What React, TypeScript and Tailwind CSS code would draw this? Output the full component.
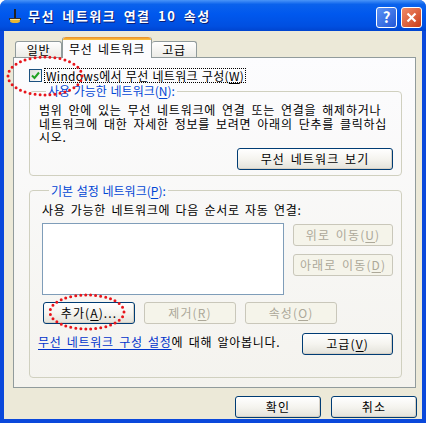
import React from 'react'

const font = "font-['Noto_Sans_CJK_KR','Noto_Sans',sans-serif]"

const XpButton = ({ label, className = '', disabled = false }: { label: React.ReactNode; className?: string; disabled?: boolean }) => (
	<div
		className={
			'flex h-[22px] items-center justify-center rounded-[3px] border text-[12px] leading-none tracking-[1.1px] ' +
			(disabled
				? 'border-[#C9C7BA] bg-[#F5F4EA] text-[#ACA899] '
				: 'border-[#003C74] bg-linear-to-b from-white via-[#F5F4EF] to-[#E3E2DA] text-black shadow-[inset_-1px_-1px_0_#D6D0C5] ') +
			className
		}
	>
		{label}
	</div>
)

const U = ({ children }: { children: React.ReactNode }) => <span className="underline underline-offset-2">{children}</span>

const TitleIcon = () => (
	<svg width="16" height="16" viewBox="0 0 16 16">
		<rect x="7" y="1" width="2" height="10" fill="#222" />
		<rect x="2" y="10" width="12" height="2" fill="#333" />
		<ellipse cx="8" cy="13" rx="5" ry="2" fill="#E8B631" />
		<rect x="3" y="11" width="10" height="1" fill="#FFE38A" />
	</svg>
)

export default function App() {
	return (
		<div className={'relative h-[427px] w-[431px] bg-white tracking-[0.7px] [word-spacing:2px] ' + font}>
			<div className="flex h-[423px] w-[426px] flex-col overflow-hidden rounded-t-[7px] bg-[#0A48DB]">
				{/* title bar */}
				<div className="flex h-[31px] items-center bg-[linear-gradient(#4A95F8_0%,#0A62EC_14%,#0058EE_45%,#004FE0_85%,#0044CF_100%)] pl-[7px] pr-[4px]">
					<TitleIcon />
					<span className="ml-[5px] text-[13px] font-bold tracking-[1.5px] text-white [word-spacing:3px] [text-shadow:1px_1px_0_#0A1E78]">무선 네트워크 연결 10 속성</span>
					<div className="ml-auto flex gap-[4px] pt-[4px] tracking-normal">
						<div className="flex h-[21px] w-[21px] items-center justify-center rounded-[3px] border border-white bg-linear-to-br from-[#5D92F4] to-[#2356D8] text-[15px] font-bold text-white">?</div>
						<div className="flex h-[21px] w-[21px] items-center justify-center rounded-[3px] border border-white bg-linear-to-br from-[#F08A67] to-[#C93B14]">
							<svg width="11" height="11" viewBox="0 0 11 11">
								<path d="M1.5 1.5 L9.5 9.5 M9.5 1.5 L1.5 9.5" stroke="white" strokeWidth="2.2" />
							</svg>
						</div>
					</div>
				</div>

				{/* body */}
				<div className="mx-[4px] mb-[4px] flex flex-1 flex-col bg-[#ECE9D8]">
					{/* tabs */}
					<div className="flex h-[26px] items-end pl-[11px] text-[12px]">
						<div className="flex h-[16px] w-[47px] items-center justify-center rounded-t-[3px] border border-b-0 border-[#919B9C] bg-linear-to-b from-white to-[#ECEBE6]">일반</div>
						<div className="relative z-10 -mb-[1px] flex h-[21px] w-[90px] flex-col rounded-t-[3px] border-x border-[#919B9C] bg-[#FCFCFE]">
							<div className="h-[3px] rounded-t-[3px] bg-linear-to-b from-[#E68B2C] to-[#FFC73C]" />
							<div className="flex flex-1 items-center justify-center">무선 네트워크</div>
						</div>
						<div className="flex h-[16px] w-[45px] items-center justify-center rounded-t-[3px] border border-b-0 border-l-0 border-[#919B9C] bg-linear-to-b from-white to-[#ECEBE6]">고급</div>
					</div>

					{/* tab panel */}
					<div className="ml-[9px] flex h-[331px] w-[403px] flex-col border border-[#919B9C] bg-linear-to-b from-[#FCFCFE] to-[#F4F3EE] text-[12px] text-black">
						<div className="ml-[15px] mt-[10px] flex items-center">
							<div className="flex h-[13px] w-[13px] items-center justify-center border border-[#1C5180] bg-linear-to-br from-[#DCDCD7] to-white">
								<svg width="9" height="9" viewBox="0 0 9 9">
									<path d="M1 4.5 L3.5 7 L8 1.5" fill="none" stroke="#21A121" strokeWidth="2" />
								</svg>
							</div>
							<span className="ml-[2px] border border-dotted border-black px-[1px] leading-[13px] tracking-[0.3px] [word-spacing:1px]">
								Windows에서 무선 네트워크 구성(<U>W</U>)
							</span>
						</div>

						<fieldset className="ml-[15px] mt-[1px] w-[373px] rounded-[4px] border border-[#D0D0BF] pb-[5px] pl-[9px] pr-[8px]">
							<legend className="ml-[7px] px-[2px] leading-[14px] tracking-normal text-[#0046D5] [word-spacing:1px]">
								사용 가능한 네트워크(<U>N</U>):
							</legend>
							<p className="whitespace-nowrap pt-[5px] leading-[13.5px] tracking-[0.75px] [word-spacing:2.5px]">
								범위 안에 있는 무선 네트워크에 연결 또는 연결을 해제하거나
								<br />
								네트워크에 대한 자세한 정보를 보려면 아래의 단추를 클릭하십
								<br />
								시오.
							</p>
							<div className="mt-[4px] flex justify-end">
								<XpButton label="무선 네트워크 보기" className="w-[156px]" />
							</div>
						</fieldset>

						<fieldset className="ml-[15px] mt-[8px] w-[373px] rounded-[4px] border border-[#D0D0BF] pb-[22px] pl-[12px] pr-[8px]">
							<legend className="ml-[7px] px-[2px] leading-[14px] tracking-normal text-[#0046D5] [word-spacing:1px]">
								기본 설정 네트워크(<U>P</U>):
							</legend>
							<div className="mt-[5px] leading-[14px]">사용 가능한 네트워크에 다음 순서로 자동 연결:</div>
							<div className="mt-[6px] flex gap-[9px]">
								<div className="h-[72px] w-[242px] border border-[#7F9DB9] bg-white" />
								<div className="flex flex-col gap-[8px] pt-[1px]">
									<XpButton disabled label={<>위로 이동(<U>U</U>)</>} className="w-[100px]" />
									<XpButton disabled label={<>아래로 이동(<U>D</U>)</>} className="w-[100px]" />
								</div>
							</div>
							<div className="ml-[1px] mt-[7px] flex gap-[9px]">
								<XpButton label={<>추가(<U>A</U>)...</>} className="w-[92px]" />
								<XpButton disabled label={<>제거(<U>R</U>)</>} className="w-[92px]" />
								<XpButton disabled label={<>속성(<U>O</U>)</>} className="w-[92px]" />
							</div>
							<div className="-ml-[4px] mt-[9px] flex items-center">
								<span className="-mt-[3px]">
									<span className="text-[#0033CC] underline underline-offset-2">무선 네트워크 구성 설정</span>에 대해 알아봅니다.
								</span>
								<XpButton label={<>고급(<U>V</U>)</>} className="ml-auto w-[91px]" />
							</div>
						</fieldset>
					</div>

					{/* dialog buttons */}
					<div className="mr-[5px] mt-[8px] flex justify-end gap-[10px]">
						<XpButton label="확인" className="w-[86px]" />
						<XpButton label="취소" className="w-[86px]" />
					</div>
				</div>
			</div>

			{/* annotation ellipses */}
			<svg className="pointer-events-none absolute left-0 top-0" width="431" height="427">
				<ellipse cx="45" cy="76" rx="37" ry="19" fill="none" stroke="#E8151B" strokeWidth="3" strokeDasharray="0 5" strokeLinecap="round" />
				<ellipse cx="87" cy="312" rx="37" ry="17" fill="none" stroke="#E8151B" strokeWidth="3" strokeDasharray="0 5" strokeLinecap="round" />
			</svg>
		</div>
	)
}
